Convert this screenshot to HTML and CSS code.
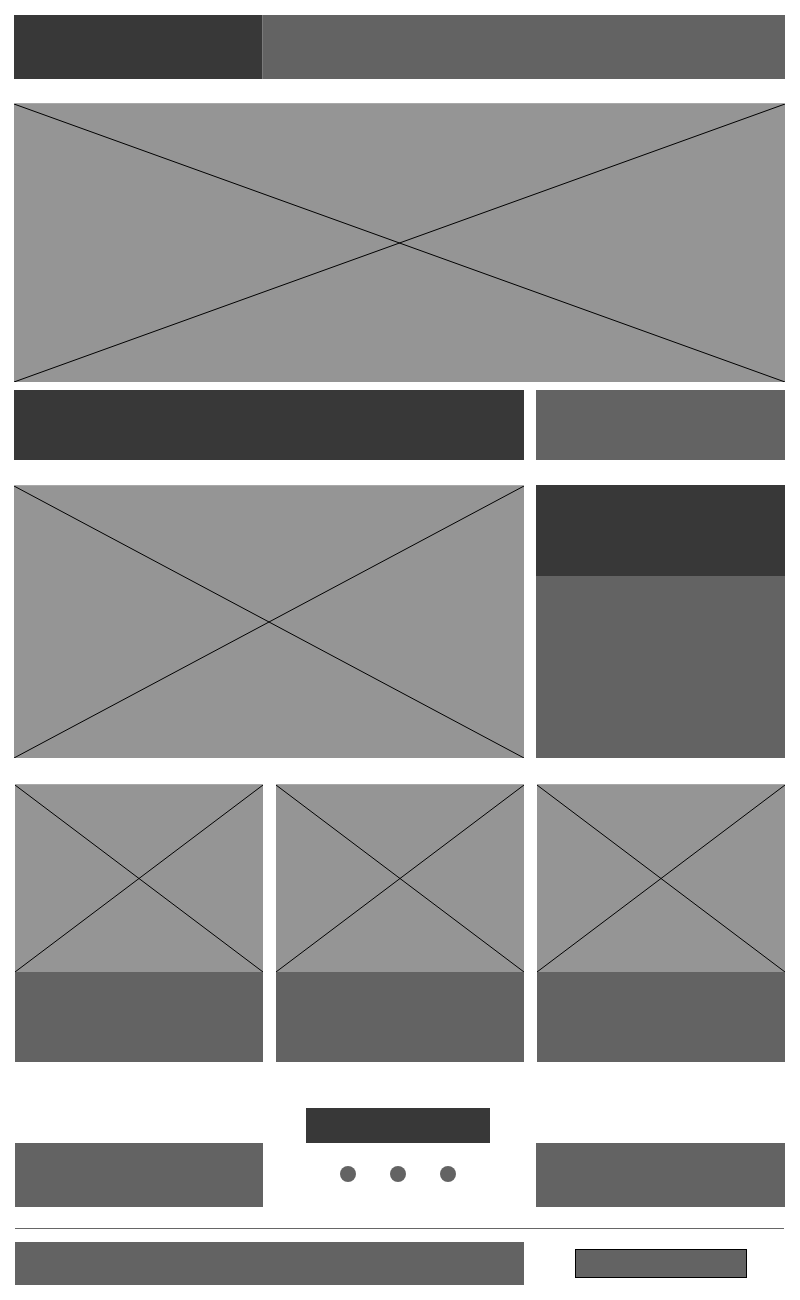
FILE: index.html
```html
<!DOCTYPE html>
<html lang="en">
<head>
    <meta charset="UTF-8">
    <meta name="viewport" content="width=device-width, initial-scale=1.0">
    <title>Wireframe</title>
    <link rel="stylesheet" href="styles.css">
</head>
<body>
    <div class="page">
        <!-- Header -->
        <div class="header">
            <div class="logo box-dark"></div>
            <div class="nav box-mid"></div>
        </div>

        <!-- Hero -->
        <div class="hero placeholder">
            <svg class="cross" viewBox="0 0 100 100" preserveAspectRatio="none">
                <line x1="0" y1="0" x2="100" y2="100" />
                <line x1="100" y1="0" x2="0" y2="100" />
            </svg>
        </div>

        <div class="grid row-intro">
            <div class="span-2 box-dark"></div>
            <div class="box-mid"></div>
        </div>

        <div class="grid row-feature">
            <div class="span-2 placeholder">
                <svg class="cross" viewBox="0 0 100 100" preserveAspectRatio="none">
                    <line x1="0" y1="0" x2="100" y2="100" />
                    <line x1="100" y1="0" x2="0" y2="100" />
                </svg>
            </div>
            <div class="side">
                <div class="side-title box-dark"></div>
                <div class="side-body box-mid"></div>
            </div>
        </div>

        <!-- Cards -->
        <div class="grid row-cards">
            <div class="card">
                <div class="card-img placeholder">
                    <svg class="cross" viewBox="0 0 100 100" preserveAspectRatio="none">
                        <line x1="0" y1="0" x2="100" y2="100" />
                        <line x1="100" y1="0" x2="0" y2="100" />
                    </svg>
                </div>
                <div class="card-body box-mid"></div>
            </div>
            <div class="card">
                <div class="card-img placeholder">
                    <svg class="cross" viewBox="0 0 100 100" preserveAspectRatio="none">
                        <line x1="0" y1="0" x2="100" y2="100" />
                        <line x1="100" y1="0" x2="0" y2="100" />
                    </svg>
                </div>
                <div class="card-body box-mid"></div>
            </div>
            <div class="card">
                <div class="card-img placeholder">
                    <svg class="cross" viewBox="0 0 100 100" preserveAspectRatio="none">
                        <line x1="0" y1="0" x2="100" y2="100" />
                        <line x1="100" y1="0" x2="0" y2="100" />
                    </svg>
                </div>
                <div class="card-body box-mid"></div>
            </div>
        </div>

        <!-- Footer -->
        <div class="grid footer-top">
            <div class="footer-block box-mid"></div>
            <div class="footer-center">
                <div class="footer-btn box-dark"></div>
                <div class="dots">
                    <span class="dot"></span>
                    <span class="dot"></span>
                    <span class="dot"></span>
                </div>
            </div>
            <div class="footer-block box-mid"></div>
        </div>

        <hr class="rule">

        <div class="grid footer-bottom">
            <div class="span-2 copyright box-mid"></div>
            <div class="cta-wrap">
                <div class="cta"></div>
            </div>
        </div>
    </div>
</body>
</html>
```

FILE: styles.css
```css
* { margin: 0; padding: 0; box-sizing: border-box; }
body { background: #fff; font-family: "Liberation Sans", Arial, sans-serif; }
.page { width: 771px; margin: 15px 0 0 14px; }

.box-dark { background: #383838; }
.box-mid { background: #636363; }
.placeholder { position: relative; background: #959595; border-top: 1px solid #a9a9a9; }
.cross { position: absolute; inset: 0; width: 100%; height: 100%; display: block; }
.cross line { stroke: #000; stroke-width: 1; vector-effect: non-scaling-stroke; }

.header { display: flex; height: 64px; }
.logo { width: 249px; border-right: 1px solid #7a7a7a; }
.nav { flex: 1; }

.hero { height: 279px; margin-top: 24px; }

.grid { display: grid; grid-template-columns: 249px 249px 249px; column-gap: 12px; }
.span-2 { grid-column: span 2; }

.row-intro { height: 70px; margin-top: 8px; }
.row-feature { height: 273px; margin-top: 25px; }
.side { display: flex; flex-direction: column; }
.side-title { height: 91px; }
.side-body { flex: 1; }

.row-cards { margin: 26px 0 0 1px; grid-template-columns: 248px 248px 248px; column-gap: 13px; }
.card { display: flex; flex-direction: column; }
.card-img { height: 188px; }
.card-body { height: 90px; }

.footer-top { margin-top: 46px; align-items: end; }
.footer-block { height: 64px; }
.footer-block:first-child { margin-left: 1px; }
.footer-center { display: flex; flex-direction: column; align-items: center; height: 99px; }
.footer-btn { width: 184px; height: 35px; margin-right: 4px; }
.dots { display: flex; gap: 34px; margin-top: 23px; margin-right: 4px; }
.dot { width: 16px; height: 16px; border-radius: 50%; background: #636363; }

.rule { border: none; border-top: 1px solid #666; margin: 21px 1px 0 1px; }

.footer-bottom { margin-top: 13px; height: 43px; }
.copyright { margin-left: 1px; }
.cta-wrap { display: flex; align-items: center; justify-content: center; }
.cta { width: 172px; height: 29px; background: #636363; border: 1px solid #000; }
```
